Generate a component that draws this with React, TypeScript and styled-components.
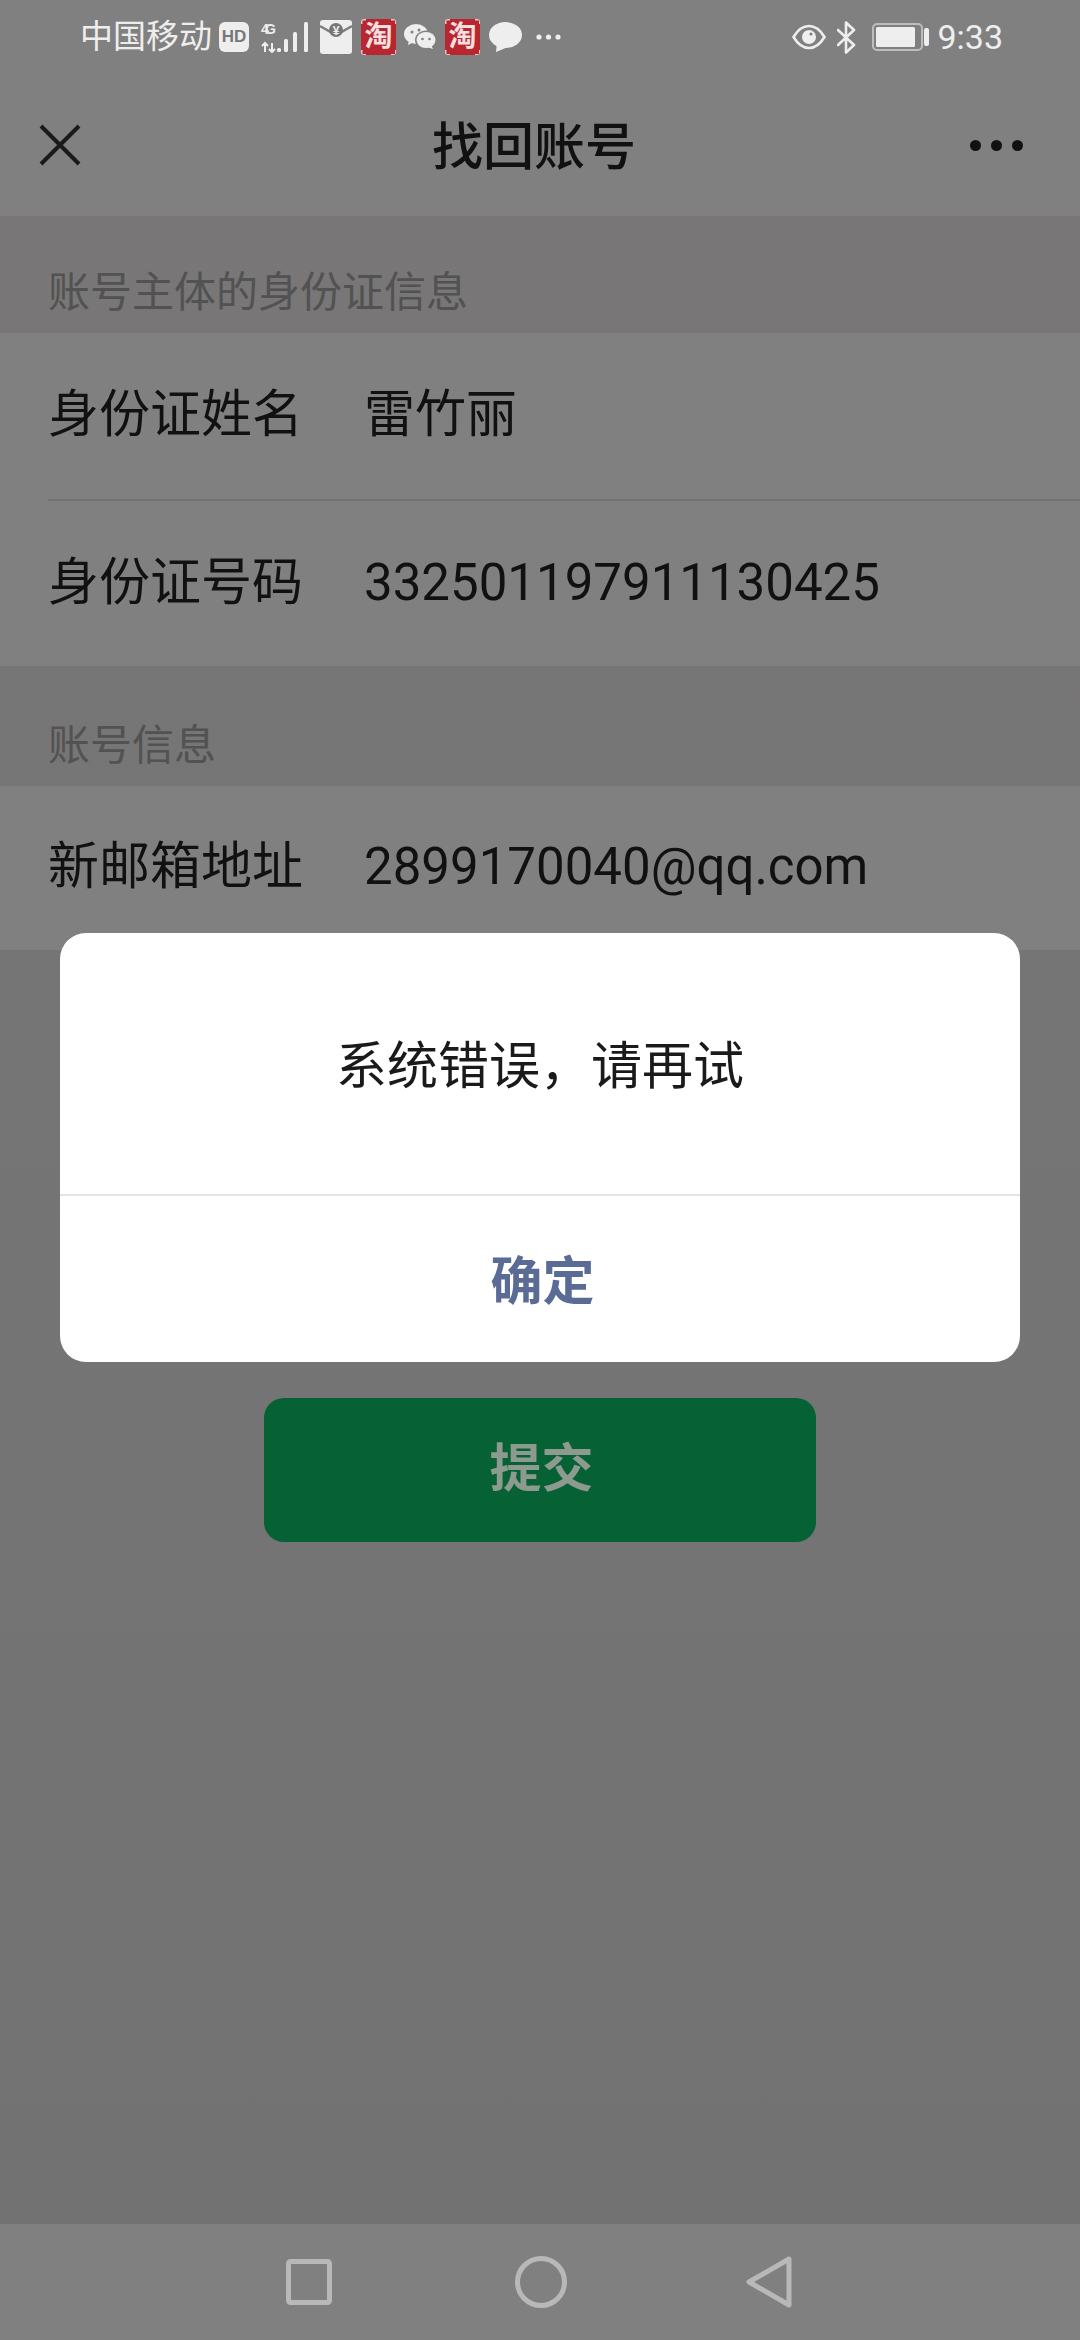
import React from 'react'
import styled, { createGlobalStyle } from 'styled-components'

const GlobalStyle = createGlobalStyle`
  html, body {
    margin: 0;
    padding: 0;
    background: #747474;
  }
  * {
    box-sizing: border-box;
  }
`

const Page = styled.div`
  position: relative;
  display: flex;
  flex-direction: column;
  width: 1080px;
  height: 2340px;
  overflow: hidden;
  background: linear-gradient(#797777, #727272);
  color: #111;
  font-family: Roboto, 'Noto Sans CJK SC', sans-serif;
`

const Header = styled.header`
  background: #808080;
`

const StatusBar = styled.div`
  display: flex;
  align-items: center;
  justify-content: space-between;
  height: 74px;
  padding: 0 77px 0 80px;
  color: #eee;
`

const StatusGroup = styled.div`
  display: flex;
  align-items: center;
`

const Carrier = styled.span`
  font-size: 33px;
  line-height: 36px;
  font-weight: 400;
`

const HdBadge = styled.span`
  display: flex;
  align-items: center;
  justify-content: center;
  width: 30px;
  height: 30px;
  margin-left: 7px;
  border-radius: 6px;
  background: #eee;
  color: #777;
  font: 700 17px 'Liberation Sans', sans-serif;
`

const tick = 'linear-gradient(#f2c4c4, #f2c4c4)'

const TaoBadge = styled.span`
  display: flex;
  align-items: center;
  justify-content: center;
  width: 35px;
  height: 36px;
  margin-left: ${p => p.$gap}px;
  border-radius: 3px;
  background-color: #b8262f;
  background-image: ${tick}, ${tick}, ${tick}, ${tick}, ${tick}, ${tick}, ${tick}, ${tick};
  background-repeat: no-repeat;
  background-size: 5px 1.5px, 1.5px 5px, 5px 1.5px, 1.5px 5px, 5px 1.5px, 1.5px 5px, 5px 1.5px, 1.5px 5px;
  background-position: 0 0, 0 0, 100% 0, 100% 0, 0 100%, 0 100%, 100% 100%, 100% 100%;
  color: #f6dfdf;
  font-size: 28px;
  font-weight: 700;
  line-height: 36px;
`

const StatusIcon = styled.svg`
  display: block;
  flex: none;
  margin-left: ${p => p.$gap}px;
`

const Clock = styled.span`
  margin-left: 8px;
  font-size: 34px;
  line-height: 36px;
  font-weight: 400;
`

const NavBar = styled.div`
  display: flex;
  align-items: center;
  justify-content: space-between;
  height: 142px;
  padding: 0 57px 0 39px;
`

const Title = styled.h1`
  margin: 5px 0 0 17px;
  font-size: 51px;
  line-height: 60px;
  font-weight: 500;
  color: #111;
`

const MoreDots = styled.div`
  display: flex;
  gap: 10px;
`

const Dot = styled.span`
  width: 11px;
  height: 11px;
  border-radius: 50%;
  background: #111;
`

const SectionLabel = styled.div`
  display: flex;
  align-items: flex-end;
  height: ${p => p.$height}px;
  padding: 0 0 ${p => p.$bottom}px 48px;
  font-size: 42px;
  line-height: 46px;
  color: #525252;
`

const Group = styled.section`
  background: #808080;
`

const Row = styled.div`
  display: flex;
  align-items: center;
  height: ${p => p.$height}px;
  margin-left: 48px;
  padding-bottom: 2px;
  border-bottom: ${p => (p.$divider ? '2px solid #727272' : 'none')};
`

const RowLabel = styled.span`
  flex: none;
  width: 316px;
  font-size: 51px;
  line-height: 60px;
  color: #111;
`

const RowValue = styled.span`
  font-size: 51px;
  line-height: 60px;
  color: #111;
`

const Submit = styled.button`
  display: block;
  flex: none;
  width: 552px;
  height: 144px;
  margin: 448px 0 0 264px;
  padding: 0 0 12px 3px;
  border: 0;
  border-radius: 20px;
  background: #066135;
  color: #8c9a90;
  font-family: inherit;
  font-size: 52px;
  font-weight: 700;
`

const BottomBar = styled.nav`
  display: flex;
  align-items: center;
  flex: none;
  height: 116px;
  margin-top: auto;
  padding: 0 0 0 284px;
  background: #808080;
`

const BottomIcon = styled.svg`
  display: block;
  margin-left: ${p => p.$gap}px;
`

const Dialog = styled.div`
  position: absolute;
  top: 933px;
  left: 60px;
  display: flex;
  flex-direction: column;
  width: 960px;
  height: 429px;
  border-radius: 26px;
  background: #fff;
`

const DialogMessage = styled.div`
  display: flex;
  align-items: center;
  justify-content: center;
  height: 263px;
  padding-top: 6px;
  border-bottom: 2px solid #e4e4e4;
  font-size: 51px;
  line-height: 60px;
  color: #1a1a1a;
`

const DialogAction = styled.button`
  flex: 1;
  padding: 0 0 3px 5px;
  border: 0;
  background: none;
  color: #5a6b96;
  font-family: inherit;
  font-size: 52px;
  font-weight: 700;
`

const App = () => {
  return (
    <Page>
      <GlobalStyle />
      <Header>
        <StatusBar>
          <StatusGroup>
            <Carrier>中国移动</Carrier>
            <HdBadge>HD</HdBadge>
            <StatusIcon $gap={11} width="50" height="32" viewBox="0 0 50 32">
              <text x="1" y="13" fontFamily="'Liberation Sans', sans-serif" fontSize="14" fontWeight="700" fill="#eee" textLength="15">4G</text>
              <path d="M5 31V22M2 25l3-3 3 3M12 22v9M9 28l3 3 3-3" fill="none" stroke="#eee" strokeWidth="2" />
              <rect x="17" y="27" width="4" height="4" rx="1.5" fill="#eee" />
              <rect x="24" y="18" width="4" height="13" rx="1.5" fill="#eee" />
              <rect x="33" y="11" width="4" height="20" rx="1.5" fill="#eee" />
              <rect x="44" y="1" width="4" height="30" rx="1.5" fill="#eee" />
            </StatusIcon>
            <StatusIcon $gap={10} width="32" height="34" viewBox="0 0 32 34">
              <rect width="32" height="34" rx="3" fill="#eee" />
              <path d="M0 6l16 9 16-9" fill="none" stroke="#808080" strokeWidth="2.5" />
              <circle cx="16" cy="10" r="7" fill="#777" />
              <text x="16" y="14.5" textAnchor="middle" fontFamily="'Liberation Sans', sans-serif" fontSize="12" fontWeight="700" fill="#eee">¥</text>
            </StatusIcon>
            <TaoBadge $gap={9}>淘</TaoBadge>
            <StatusIcon $gap={8} width="32" height="26" viewBox="0 0 32 26">
              <ellipse cx="12" cy="10" rx="12" ry="10" fill="#eee" />
              <path d="M5 16l-1 5 6-3z" fill="#eee" />
              <ellipse cx="22" cy="16" rx="11" ry="9.5" fill="#808080" />
              <ellipse cx="22" cy="16" rx="9.5" ry="8" fill="#eee" />
              <path d="M27 21l2 4-6-2z" fill="#eee" />
              <circle cx="8" cy="8" r="1.5" fill="#808080" />
              <circle cx="15" cy="6" r="1.5" fill="#808080" />
              <circle cx="18.5" cy="15" r="1.3" fill="#808080" />
              <circle cx="25.5" cy="15" r="1.3" fill="#808080" />
            </StatusIcon>
            <TaoBadge $gap={9}>淘</TaoBadge>
            <StatusIcon $gap={9} width="33" height="30" viewBox="0 0 33 30">
              <ellipse cx="16.5" cy="13" rx="16.5" ry="13" fill="#eee" />
              <path d="M8 20l-1 10 12-5z" fill="#eee" />
            </StatusIcon>
            <StatusIcon $gap={14} width="25" height="6" viewBox="0 0 25 6">
              <circle cx="3" cy="3" r="2.6" fill="#eee" />
              <circle cx="12.5" cy="3" r="2.6" fill="#eee" />
              <circle cx="22" cy="3" r="2.6" fill="#eee" />
            </StatusIcon>
          </StatusGroup>
          <StatusGroup>
            <StatusIcon $gap={0} width="34" height="26" viewBox="0 0 34 26">
              <path d="M1.5 13C6 5.5 11 2 17 2s11 3.500 15.500 11C28 20.500 23 24 17 24S6 20.500 1.500 13z" fill="none" stroke="#eee" strokeWidth="2.6" />
              <circle cx="17" cy="13" r="7" fill="#eee" />
              <circle cx="19" cy="10" r="1.6" fill="#808080" />
            </StatusIcon>
            <StatusIcon $gap={11} width="19" height="33" viewBox="0 0 19 33">
              <path d="M1 9l16 15-8 7.500V1.500L17 9 1 24" fill="none" stroke="#eee" strokeWidth="2.600" strokeLinejoin="round" strokeLinecap="round" />
            </StatusIcon>
            <StatusIcon $gap={16} width="57" height="28" viewBox="0 0 57 28">
              <rect x="1" y="1" width="49" height="26" rx="4" fill="none" stroke="#bdbdbd" strokeWidth="2" />
              <rect x="4" y="4" width="39" height="20" rx="1.500" fill="#eee" />
              <rect x="52" y="5" width="5" height="18" rx="2" fill="#eee" />
            </StatusIcon>
            <Clock>9:33</Clock>
          </StatusGroup>
        </StatusBar>
        <NavBar>
          <svg width="42" height="42" viewBox="0 0 42 42">
            <path d="M2 2l38 38M40 2L2 40" fill="none" stroke="#1a1a1a" strokeWidth="4" />
          </svg>
          <Title>找回账号</Title>
          <MoreDots>
            <Dot />
            <Dot />
            <Dot />
          </MoreDots>
        </NavBar>
      </Header>

      <SectionLabel $height={117} $bottom={17}>账号主体的身份证信息</SectionLabel>
      <Group>
        <Row $height={168} $divider>
          <RowLabel>身份证姓名</RowLabel>
          <RowValue>雷竹丽</RowValue>
        </Row>
        <Row $height={165}>
          <RowLabel>身份证号码</RowLabel>
          <RowValue>332501197911130425</RowValue>
        </Row>
      </Group>

      <SectionLabel $height={120} $bottom={17}>账号信息</SectionLabel>
      <Group>
        <Row $height={164}>
          <RowLabel>新邮箱地址</RowLabel>
          <RowValue>2899170040@qq.com</RowValue>
        </Row>
      </Group>

      <Submit>提交</Submit>

      <BottomBar>
        <BottomIcon $gap={0} width="50" height="50" viewBox="0 0 50 50">
          <rect x="4.500" y="4.500" width="41" height="41" rx="2" fill="none" stroke="#b8b8b8" strokeWidth="5" />
        </BottomIcon>
        <BottomIcon $gap={181} width="52" height="52" viewBox="0 0 52 52">
          <circle cx="26" cy="26" r="23.500" fill="none" stroke="#b8b8b8" strokeWidth="5" />
        </BottomIcon>
        <BottomIcon $gap={178} width="48" height="54" viewBox="0 0 48 54">
          <path d="M44 4v46L4 27z" fill="none" stroke="#b8b8b8" strokeWidth="5" strokeLinejoin="round" />
        </BottomIcon>
      </BottomBar>

      <Dialog>
        <DialogMessage>系统错误，请再试</DialogMessage>
        <DialogAction>确定</DialogAction>
      </Dialog>
    </Page>
  )
}

export default App
